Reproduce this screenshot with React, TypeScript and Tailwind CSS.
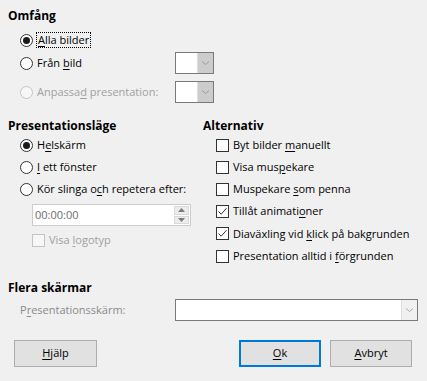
import React from "react";

const font = { fontFamily: '"Open Sans", "Noto Sans", sans-serif' };

function U({ children }: { children: React.ReactNode }) {
  return <span className="underline underline-offset-2 decoration-1">{children}</span>;
}

function Radio({ checked = false, disabled = false }: { checked?: boolean; disabled?: boolean }) {
  return (
    <span
      className={`flex h-[13px] w-[13px] shrink-0 items-center justify-center rounded-full border ${
        disabled ? "border-[#c4c4c4] bg-[#f7f7f7]" : "border-[#333333] bg-white"
      }`}
    >
      {checked && <span className="h-[7px] w-[7px] rounded-full bg-[#1a1a1a]" />}
    </span>
  );
}

function Check({ checked = false, disabled = false }: { checked?: boolean; disabled?: boolean }) {
  return (
    <span
      className={`flex h-[13px] w-[13px] shrink-0 items-center justify-center border ${
        disabled ? "border-[#c4c4c4] bg-[#f7f7f7]" : "border-[#333333] bg-white"
      }`}
    >
      {checked && (
        <svg width="11" height="11" viewBox="0 0 11 11">
          <path d="M1.5 5.5 L4.2 8.2 L9.5 2.2" fill="none" stroke="#333333" strokeWidth="1" />
        </svg>
      )}
    </span>
  );
}

function Chevron({ color = "#9a9a9a" }: { color?: string }) {
  return (
    <svg width="9" height="6" viewBox="0 0 9 6">
      <path d="M1 1.5 L4.5 4.5 L8 1.5" fill="none" stroke={color} strokeWidth="1" />
    </svg>
  );
}

function SmallCombo() {
  return (
    <div className="flex h-[22px] w-[39px] border border-[#7a7a7a] bg-white">
      <div className="flex-1 bg-white" />
      <div className="flex w-[16px] items-center justify-center border-l border-[#e0e0e0] bg-[#cccccc]">
        <Chevron />
      </div>
    </div>
  );
}

export default function App() {
  return (
    <div className="h-[381px] w-[427px] overflow-hidden bg-[#f0f0f0] pl-[8px] pt-[8px] text-[11px] text-black" style={font}>
      {/* Omfång */}
      <div className="h-[16px] text-[12px] font-bold leading-[16px]">Omfång</div>
      <div className="mt-[5px] flex h-[22px] items-center gap-[3px] pl-[12px]">
        <Radio checked />
        <span className="border border-dotted border-black px-[1px] leading-[14px]">
          <U>A</U>lla bilder
        </span>
      </div>
      <div className="mt-[1px] flex h-[22px] items-center pl-[12px]">
        <div className="flex w-[155px] items-center gap-[3px]">
          <Radio />
          <span className="pl-[1px]">
            Från <U>b</U>ild
          </span>
        </div>
        <SmallCombo />
      </div>
      <div className="mt-[7px] flex h-[22px] items-center pl-[12px]">
        <div className="flex w-[155px] items-center gap-[3px] text-[#a0a0a0]">
          <Radio disabled />
          <span className="pl-[1px]">
            Anpassa<U>d</U> presentation:
          </span>
        </div>
        <SmallCombo />
      </div>

      {/* Two columns */}
      <div className="mt-[15px] flex">
        <div className="w-[195px]">
          <div className="h-[16px] text-[12px] font-bold leading-[16px]">Presentationsläge</div>
          <div className="flex h-[22px] items-center gap-[4px] pl-[12px]">
            <Radio checked />
            <span>
              H<U>e</U>lskärm
            </span>
          </div>
          <div className="flex h-[22px] items-center gap-[4px] pl-[12px]">
            <Radio />
            <span>
              <U>I</U> ett fönster
            </span>
          </div>
          <div className="flex h-[22px] items-center gap-[4px] pl-[12px]">
            <Radio />
            <span>
              Kör slinga o<U>c</U>h repetera efter:
            </span>
          </div>
          <div className="ml-[24px] mt-[4px] flex h-[22px] w-[159px] items-center border border-[#cccccc] bg-white">
            <span className="flex-1 pl-[2px] text-[#6d6d6d]">00:00:00</span>
            <div className="mr-[1px] flex h-[18px] w-[15px] flex-col gap-[1px]">
              <div className="flex flex-1 items-center justify-center border border-[#dadada] bg-[#ececec]">
                <svg width="7" height="4" viewBox="0 0 7 4">
                  <path d="M0 4 L3.5 0 L7 4 Z" fill="#7a7a7a" />
                </svg>
              </div>
              <div className="flex flex-1 items-center justify-center border border-[#dadada] bg-[#ececec]">
                <svg width="7" height="4" viewBox="0 0 7 4">
                  <path d="M0 0 L3.5 4 L7 0 Z" fill="#7a7a7a" />
                </svg>
              </div>
            </div>
          </div>
          <div className="mt-[3px] flex h-[22px] items-center gap-[4px] pl-[24px] text-[#a0a0a0]">
            <Check disabled />
            <span>
              Visa <U>l</U>ogotyp
            </span>
          </div>
        </div>

        <div className="flex-1">
          <div className="h-[16px] text-[12px] font-bold leading-[16px]">Alternativ</div>
          {[
            { c: false, t: <>Byt bilder <U>m</U>anuellt</> },
            { c: false, t: <>Visa mus<U>p</U>ekare</> },
            { c: false, t: <>Muspekare <U>s</U>om penna</> },
            { c: true, t: <>Tillåt animati<U>o</U>ner</> },
            { c: true, t: <>Diaväxling vid <U>k</U>lick på bakgrunden</> },
            { c: false, t: <>Presentation alltid i <U>f</U>örgrunden</> },
          ].map((r, i) => (
            <div key={i} className="flex h-[22.2px] items-center gap-[4px] pl-[13px]">
              <Check checked={r.c} />
              <span>{r.t}</span>
            </div>
          ))}
        </div>
      </div>

      {/* Flera skärmar */}
      <div className="mt-[13px] h-[16px] text-[12px] font-bold leading-[16px]">Flera skärmar</div>
      <div className="mt-[3px] flex h-[22px] items-center pl-[12px]">
        <div className="w-[155px] text-[#8a8a8a]">
          P<U>r</U>esentationsskärm:
        </div>
        <div className="flex h-[22px] w-[243px] border border-[#7a7a7a] bg-white">
          <div className="flex-1" />
          <div className="flex w-[16px] items-center justify-center border-l border-[#dddddd] bg-[#f0f0f0]">
            <Chevron color="#a8a8a8" />
          </div>
        </div>
      </div>

      {/* Buttons */}
      <div className="mt-[19px] flex h-[27px]">
        <button className="ml-[6px] flex h-[27px] w-[83px] items-center justify-center border border-[#adadad] bg-[#e1e1e1]">
          <span>
            <U>H</U>jälp
          </span>
        </button>
        <button className="ml-[142px] flex h-[27px] w-[82px] items-center justify-center border-2 border-[#0078d7] bg-[#e1e1e1]">
          <span>
            <U>O</U>k
          </span>
        </button>
        <button className="ml-[9px] flex h-[27px] w-[82px] items-center justify-center border border-[#adadad] bg-[#e1e1e1]">
          <span>
            <U>A</U>vbryt
          </span>
        </button>
      </div>
    </div>
  );
}
